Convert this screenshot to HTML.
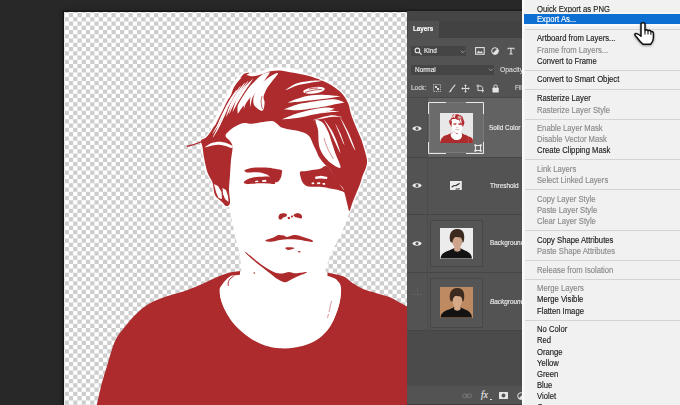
<!DOCTYPE html>
<html><head><meta charset="utf-8"><title>Layers</title>
<style>
html,body{margin:0;padding:0;}
body{width:680px;height:405px;overflow:hidden;background:#282828;position:relative;font-family:"Liberation Sans",sans-serif;}
#stage{position:absolute;left:0;top:0;width:680px;height:405px;overflow:hidden;background:#282828;}
#topbar{display:none;}
#canvas{position:absolute;left:63.700px;top:12.400px;width:344px;height:393px;background-color:#fff;
 overflow:hidden;box-shadow:-0.500px -0.500px 0 0.700px #131313, 0 0 5px 1px rgba(0,0,0,0.35);}
#canvas svg{position:absolute;left:-63.700px;top:-12.400px;}
#panel{position:absolute;left:408px;top:10px;width:116px;height:395px;background:#535353;overflow:hidden;color:#e4e4e4;font-size:8px;}
#menu{position:absolute;left:521.700px;top:0;width:158.300px;height:405px;background:#f1f1f1;overflow:hidden;box-shadow:inset 2.500px 0 0 #fafafa;}
.mi{-webkit-text-stroke:0.150px currentColor;position:absolute;left:15px;height:12px;line-height:12px;font-size:8.3px;color:#1c1c1c;white-space:nowrap;}
.mi span{display:inline-block;transform:scaleX(0.925);transform-origin:0 50%;}
.mi.dis{color:#8a8a8a;}
.mi.hi{color:#fff;}
.hl{position:absolute;left:2.500px;width:156px;height:10.100px;background:#0c6fd1;box-shadow:0 -1.500px 0 #f8f7f4, 0 2px 0 #fafafa;}
.sep{position:absolute;left:3px;width:156px;height:1px;background:#d4d4d4;}
#panel{left:0;top:0;width:680px;height:405px;background:none;pointer-events:none;}
#panel .a{position:absolute;}
#panel .t{position:absolute;white-space:nowrap;line-height:10px;height:10px;font-size:7.6px;color:#eeeeee;-webkit-text-stroke:0.150px currentColor;}
#panel .t span{display:inline-block;transform-origin:0 50%;}

</style></head><body>
<div id="stage">
<div id="topbar"></div>
<div id="canvas">
<svg width="680" height="405" viewBox="0 0 680 405">
<path d="M60.38 6.51H409M60.38 15.03H409M60.38 23.54H409M60.38 32.06H409M60.38 40.58H409M60.38 49.09H409M60.38 57.61H409M60.38 66.13H409M60.38 74.64H409M60.38 83.16H409M60.38 91.67H409M60.38 100.19H409M60.38 108.70H409M60.38 117.22H409M60.38 125.74H409M60.38 134.25H409M60.38 142.77H409M60.38 151.28H409M60.38 159.80H409M60.38 168.32H409M60.38 176.83H409M60.38 185.35H409M60.38 193.87H409M60.38 202.38H409M60.38 210.90H409M60.38 219.41H409M60.38 227.93H409M60.38 236.45H409M60.38 244.96H409M60.38 253.48H409M60.38 261.99H409M60.38 270.51H409M60.38 279.03H409M60.38 287.54H409M60.38 296.06H409M60.38 304.57H409M60.38 313.09H409M60.38 321.61H409M60.38 330.12H409M60.38 338.64H409M60.38 347.15H409M60.38 355.67H409M60.38 364.18H409M60.38 372.70H409M60.38 381.22H409M60.38 389.73H409M60.38 398.25H409M60.38 406.76H409" stroke="#cdcdcd" stroke-width="4.258" stroke-dasharray="4.258 4.258" fill="none"/>
<path d="M56.12 10.77H409M56.12 19.29H409M56.12 27.80H409M56.12 36.32H409M56.12 44.84H409M56.12 53.35H409M56.12 61.87H409M56.12 70.38H409M56.12 78.90H409M56.12 87.42H409M56.12 95.93H409M56.12 104.45H409M56.12 112.96H409M56.12 121.48H409M56.12 129.99H409M56.12 138.51H409M56.12 147.03H409M56.12 155.54H409M56.12 164.06H409M56.12 172.58H409M56.12 181.09H409M56.12 189.61H409M56.12 198.12H409M56.12 206.64H409M56.12 215.16H409M56.12 223.67H409M56.12 232.19H409M56.12 240.70H409M56.12 249.22H409M56.12 257.74H409M56.12 266.25H409M56.12 274.77H409M56.12 283.28H409M56.12 291.80H409M56.12 300.32H409M56.12 308.83H409M56.12 317.35H409M56.12 325.86H409M56.12 334.38H409M56.12 342.89H409M56.12 351.41H409M56.12 359.93H409M56.12 368.44H409M56.12 376.96H409M56.12 385.47H409M56.12 393.99H409M56.12 402.51H409" stroke="#cdcdcd" stroke-width="4.258" stroke-dasharray="4.258 4.258" fill="none"/>
<g id="pt">
<path d="M222.0 140.0C223.0 135.2 225.7 133.5 228.0 131.0C230.3 128.5 232.3 126.7 236.0 125.0C239.7 123.3 244.0 122.0 250.0 121.0C256.0 120.0 265.3 118.5 272.0 119.0C278.7 119.5 283.7 124.2 290.0 124.0C296.3 123.8 303.3 117.8 310.0 118.0C316.7 118.2 324.2 119.7 330.0 125.0C335.8 130.3 341.3 139.2 345.0 150.0C348.7 160.8 351.1 180.3 352.0 190.0C352.9 199.7 351.5 202.7 350.5 208.0C349.5 213.3 347.8 217.2 346.0 222.0C344.2 226.8 341.8 232.1 339.5 237.0C337.2 241.9 334.0 247.2 332.0 251.7C330.0 256.2 328.4 260.6 327.5 264.0C326.6 267.4 324.1 268.8 326.5 272.0C328.9 275.2 339.4 278.3 342.0 283.0C344.6 287.7 344.0 292.2 342.0 300.0C340.0 307.8 337.0 322.2 330.0 330.0C323.0 337.8 310.0 344.0 300.0 347.0C290.0 350.0 279.2 350.0 270.0 348.0C260.8 346.0 252.3 341.0 245.0 335.0C237.7 329.0 230.2 319.2 226.0 312.0C221.8 304.8 220.0 297.8 220.0 292.0C220.0 286.2 222.7 280.3 226.0 277.0C229.3 273.7 237.5 273.8 240.0 272.0C242.5 270.2 240.9 269.0 240.8 266.0C240.7 263.0 240.4 258.4 239.6 254.0C238.8 249.6 237.2 244.8 236.0 239.5C234.8 234.2 233.4 227.8 232.2 222.0C230.9 216.2 230.2 210.3 228.5 205.0C226.8 199.7 223.1 197.5 222.0 190.0C220.9 182.5 222.0 168.3 222.0 160.0C222.0 151.7 221.0 144.8 222.0 140.0Z" fill="#fff" />
<path d="M201.0 140.5C201.6 138.9 204.4 138.9 206.0 137.5C207.6 136.1 209.1 133.9 210.3 132.3C211.5 130.7 212.1 129.3 213.0 128.0C213.9 126.7 214.6 126.2 215.7 124.3C216.8 122.3 218.4 119.0 219.7 116.3C221.0 113.6 222.4 111.0 223.7 108.3C225.0 105.6 226.5 102.5 227.7 100.3C228.9 98.1 229.9 97.2 231.0 95.0C232.1 92.8 232.5 89.9 234.0 87.3C235.5 84.7 238.1 81.3 240.0 79.3C241.9 77.2 243.3 75.5 245.5 75.0C247.7 74.5 250.1 76.5 253.0 76.3C255.9 76.1 259.8 74.8 262.7 74.0C265.6 73.2 267.8 71.9 270.7 71.3C273.6 70.7 276.8 70.3 280.0 70.5C283.2 70.7 286.7 71.7 290.0 72.3C293.3 72.9 296.7 73.3 300.0 74.0C303.3 74.7 306.7 75.3 310.0 76.3C313.3 77.3 317.0 78.6 320.0 79.8C323.0 81.0 325.7 82.1 328.0 83.3C330.3 84.5 332.0 85.6 334.0 87.0C336.0 88.4 338.2 89.8 340.0 91.5C341.8 93.2 343.5 95.2 345.0 97.5C346.5 99.8 347.9 102.5 348.8 105.0C349.7 107.5 349.7 109.8 350.5 112.5C351.3 115.2 352.4 118.1 353.5 121.0C354.6 123.9 356.0 126.8 357.3 130.0C358.6 133.2 360.3 136.7 361.5 140.0C362.7 143.3 363.6 146.7 364.5 150.0C365.4 153.3 366.8 157.1 367.0 160.0C367.2 162.9 366.8 164.8 366.0 167.5C365.2 170.2 363.5 173.2 362.5 176.0C361.5 178.8 361.1 181.0 360.0 184.0C358.9 187.0 357.2 190.9 356.0 194.0C354.8 197.1 353.6 199.7 352.5 202.5C351.4 205.3 350.3 210.6 349.5 211.0C348.7 211.4 348.2 207.7 347.5 205.0C346.8 202.3 345.8 197.8 345.0 195.0C344.2 192.2 344.2 190.0 343.0 188.0C341.8 186.0 339.5 185.0 338.0 183.0C336.5 181.0 335.3 178.2 334.0 176.0C332.7 173.8 331.7 171.6 330.0 169.5C328.3 167.4 325.8 165.6 324.0 163.5C322.2 161.4 320.2 159.0 319.0 157.0C317.8 155.0 317.4 153.4 316.5 151.3C315.6 149.2 314.4 147.0 313.3 144.7C312.2 142.4 311.3 139.2 310.0 137.3C308.7 135.4 307.4 134.4 305.3 133.3C303.2 132.2 300.2 131.4 297.3 130.7C294.4 130.0 290.7 129.9 288.0 129.3C285.3 128.7 282.8 128.2 281.0 127.3C279.2 126.4 278.6 124.8 277.0 123.7C275.4 122.7 274.4 121.2 271.7 121.0C269.0 120.8 264.3 121.8 261.0 122.3C257.7 122.8 254.6 123.6 251.7 123.7C248.8 123.8 246.4 122.6 243.7 123.0C241.0 123.4 238.1 125.0 235.7 126.3C233.2 127.6 230.7 129.4 229.0 131.0C227.3 132.6 225.3 134.3 225.5 136.0C225.7 137.7 228.8 139.2 230.0 141.0C231.2 142.8 232.3 143.8 232.5 147.0C232.7 150.2 231.4 155.3 231.0 160.0C230.6 164.7 230.3 170.0 230.0 175.0C229.7 180.0 229.0 185.3 229.0 190.0C229.0 194.7 230.5 200.3 230.0 203.0C229.5 205.7 227.3 206.2 226.0 206.0C224.7 205.8 223.8 203.8 222.0 202.0C220.2 200.2 216.6 198.2 215.0 195.0C213.4 191.8 213.8 186.2 212.5 182.5C211.2 178.8 208.9 176.7 207.5 172.5C206.1 168.3 204.8 161.8 204.0 157.5C203.2 153.2 203.0 149.8 202.5 147.0C202.0 144.2 200.4 142.1 201.0 140.5Z" fill="none" stroke="#fff" stroke-width="2.600" stroke-linejoin="round"/>
<path d="M214.0 127.0C214.9 125.2 218.1 119.4 219.7 116.3C221.3 113.2 222.4 111.0 223.7 108.3C225.0 105.6 226.5 102.5 227.7 100.3C228.9 98.1 229.9 97.2 231.0 95.0C232.1 92.8 232.5 89.9 234.0 87.3C235.5 84.7 238.1 81.3 240.0 79.3C241.9 77.2 243.3 75.5 245.5 75.0C247.7 74.5 250.1 76.5 253.0 76.3C255.9 76.1 259.8 74.8 262.7 74.0C265.6 73.2 267.8 71.9 270.7 71.3C273.6 70.7 276.8 70.5 280.0 70.5C283.2 70.5 286.7 71.0 290.0 71.5C293.3 72.0 298.3 72.9 300.0 73.2" fill="none" stroke="#fff" stroke-width="6.500" stroke-linecap="round"/>
<path d="M201.0 140.5C201.6 138.9 204.4 138.9 206.0 137.5C207.6 136.1 209.1 133.9 210.3 132.3C211.5 130.7 212.1 129.3 213.0 128.0C213.9 126.7 214.6 126.2 215.7 124.3C216.8 122.3 218.4 119.0 219.7 116.3C221.0 113.6 222.4 111.0 223.7 108.3C225.0 105.6 226.5 102.5 227.7 100.3C228.9 98.1 229.9 97.2 231.0 95.0C232.1 92.8 232.5 89.9 234.0 87.3C235.5 84.7 238.1 81.3 240.0 79.3C241.9 77.2 243.3 75.5 245.5 75.0C247.7 74.5 250.1 76.5 253.0 76.3C255.9 76.1 259.8 74.8 262.7 74.0C265.6 73.2 267.8 71.9 270.7 71.3C273.6 70.7 276.8 70.3 280.0 70.5C283.2 70.7 286.7 71.7 290.0 72.3C293.3 72.9 296.7 73.3 300.0 74.0C303.3 74.7 306.7 75.3 310.0 76.3C313.3 77.3 317.0 78.6 320.0 79.8C323.0 81.0 325.7 82.1 328.0 83.3C330.3 84.5 332.0 85.6 334.0 87.0C336.0 88.4 338.2 89.8 340.0 91.5C341.8 93.2 343.5 95.2 345.0 97.5C346.5 99.8 347.9 102.5 348.8 105.0C349.7 107.5 349.7 109.8 350.5 112.5C351.3 115.2 352.4 118.1 353.5 121.0C354.6 123.9 356.0 126.8 357.3 130.0C358.6 133.2 360.3 136.7 361.5 140.0C362.7 143.3 363.6 146.7 364.5 150.0C365.4 153.3 366.8 157.1 367.0 160.0C367.2 162.9 366.8 164.8 366.0 167.5C365.2 170.2 363.5 173.2 362.5 176.0C361.5 178.8 361.1 181.0 360.0 184.0C358.9 187.0 357.2 190.9 356.0 194.0C354.8 197.1 353.6 199.7 352.5 202.5C351.4 205.3 350.3 210.6 349.5 211.0C348.7 211.4 348.2 207.7 347.5 205.0C346.8 202.3 345.8 197.8 345.0 195.0C344.2 192.2 344.2 190.0 343.0 188.0C341.8 186.0 339.5 185.0 338.0 183.0C336.5 181.0 335.3 178.2 334.0 176.0C332.7 173.8 331.7 171.6 330.0 169.5C328.3 167.4 325.8 165.6 324.0 163.5C322.2 161.4 320.2 159.0 319.0 157.0C317.8 155.0 317.4 153.4 316.5 151.3C315.6 149.2 314.4 147.0 313.3 144.7C312.2 142.4 311.3 139.2 310.0 137.3C308.7 135.4 307.4 134.4 305.3 133.3C303.2 132.2 300.2 131.4 297.3 130.7C294.4 130.0 290.7 129.9 288.0 129.3C285.3 128.7 282.8 128.2 281.0 127.3C279.2 126.4 278.6 124.8 277.0 123.7C275.4 122.7 274.4 121.2 271.7 121.0C269.0 120.8 264.3 121.8 261.0 122.3C257.7 122.8 254.6 123.6 251.7 123.7C248.8 123.8 246.4 122.6 243.7 123.0C241.0 123.4 238.1 125.0 235.7 126.3C233.2 127.6 230.7 129.4 229.0 131.0C227.3 132.6 225.3 134.3 225.5 136.0C225.7 137.7 228.8 139.2 230.0 141.0C231.2 142.8 232.3 143.8 232.5 147.0C232.7 150.2 231.4 155.3 231.0 160.0C230.6 164.7 230.3 170.0 230.0 175.0C229.7 180.0 229.0 185.3 229.0 190.0C229.0 194.7 230.5 200.3 230.0 203.0C229.5 205.7 227.3 206.2 226.0 206.0C224.7 205.8 223.8 203.8 222.0 202.0C220.2 200.2 216.6 198.2 215.0 195.0C213.4 191.8 213.8 186.2 212.5 182.5C211.2 178.8 208.9 176.7 207.5 172.5C206.1 168.3 204.8 161.8 204.0 157.5C203.2 153.2 203.0 149.8 202.5 147.0C202.0 144.2 200.4 142.1 201.0 140.5Z" fill="#ae2b2d" />
<path d="M96.8 405.0C97.2 403.0 98.6 396.8 99.5 393.0C100.4 389.2 100.7 387.1 102.0 382.5C103.3 377.9 105.5 370.9 107.2 365.2C108.9 359.4 110.9 352.5 112.4 348.0C114.0 343.5 114.5 341.5 116.5 338.0C118.5 334.5 121.2 331.3 124.5 327.2C127.8 323.1 132.3 317.4 136.6 313.4C140.9 309.4 145.2 305.9 150.4 303.0C155.6 300.1 161.9 298.0 167.7 296.0C173.5 294.0 179.2 293.0 185.0 291.0C190.8 289.0 197.0 286.2 202.2 284.0C207.4 281.8 211.7 279.3 216.0 277.5C220.3 275.7 224.0 274.1 228.0 273.0C232.0 271.9 238.0 271.3 240.0 271.0L240.0 276.0C237.0 277.5 225.3 281.8 222.0 285.0C218.7 288.2 219.5 290.8 220.0 295.0C220.5 299.2 222.5 305.0 225.0 310.0C227.5 315.0 230.8 320.4 235.0 325.0C239.2 329.6 245.0 334.2 250.0 337.5C255.0 340.8 260.0 343.3 265.0 345.0C270.0 346.7 275.0 347.2 280.0 347.5C285.0 347.8 289.6 347.8 295.0 346.5C300.4 345.2 307.1 342.8 312.5 340.0C317.9 337.2 323.3 335.0 327.5 330.0C331.7 325.0 335.2 316.2 337.5 310.0C339.8 303.8 340.8 297.1 341.0 292.5C341.2 287.9 341.2 285.2 339.0 282.5C336.8 279.8 329.4 277.1 327.5 276.0L327.5 272.5C329.0 272.9 333.8 273.8 336.7 274.6C339.6 275.4 342.5 275.9 345.2 277.3C347.9 278.7 349.5 281.0 352.6 283.0C355.7 285.0 359.7 287.6 363.6 289.2C367.5 290.8 371.7 291.7 375.8 292.9C379.9 294.1 384.3 295.2 388.0 296.6C391.7 298.0 394.5 299.8 397.8 301.5C401.1 303.2 406.3 306.1 408.0 307.0L408.0 405.0L96.8 405.0Z" fill="#ae2b2d" />
<path d="M238.0 275.0C231.3 276.1 232.7 274.8 230.0 276.5C227.3 278.2 223.7 281.9 222.0 285.0C220.3 288.1 219.5 290.8 220.0 295.0C220.5 299.2 222.5 305.0 225.0 310.0C227.5 315.0 230.8 320.3 235.0 325.0C239.2 329.7 245.0 334.6 250.0 338.0C255.0 341.4 260.0 343.8 265.0 345.5C270.0 347.2 275.0 348.0 280.0 348.3C285.0 348.6 290.0 348.3 295.0 347.5C300.0 346.7 305.3 345.4 309.8 343.5C314.3 341.6 318.3 339.3 322.0 336.0C325.7 332.7 329.2 328.0 331.8 323.5C334.4 319.0 336.4 313.3 337.9 308.8C339.3 304.3 340.1 300.3 340.5 296.6C340.9 292.9 340.9 289.6 340.3 286.8C339.7 284.0 338.2 281.3 336.7 279.7C335.1 278.1 332.6 277.6 331.0 277.0C329.4 276.4 332.2 277.2 327.0 276.0C321.8 274.8 309.5 271.0 300.0 270.0C290.5 269.0 280.3 269.2 270.0 270.0C259.7 270.8 244.7 273.9 238.0 275.0Z" fill="#fff" />
<path d="M233.5 276.5C229.5 278 227.5 282 228.3 286" fill="none" stroke="#ae2b2d" stroke-width="1"/>
<path d="M331.5 301L329 312M328.5 314L327.5 318" fill="none" stroke="#ae2b2d" stroke-width="0.6" opacity="0.8"/>
<path d="M268.6 72.3C267.5 72.5 264.4 73.3 262.3 74.6C260.1 75.9 258.0 78.1 255.8 80.2C253.6 82.3 251.0 85.0 249.2 87.2C247.4 89.4 246.4 91.1 244.9 93.3C243.5 95.5 241.7 98.2 240.5 100.3C239.3 102.4 238.2 104.0 237.7 106.1C237.2 108.2 237.6 111.8 237.7 112.9C237.8 114.1 237.6 113.9 238.3 113.1C239.0 112.2 240.5 109.5 241.7 107.9C242.9 106.3 244.0 105.5 245.5 103.7C246.9 101.9 248.9 99.3 250.5 97.3C252.0 95.3 253.0 93.9 254.8 91.8C256.5 89.7 259.0 87.0 260.8 84.8C262.6 82.6 264.3 80.3 265.7 78.4C267.2 76.5 268.9 74.3 269.4 73.3C269.8 72.3 269.8 72.1 268.6 72.3Z" fill="#fff" />
<path d="M277.2 73.1C276.2 73.4 273.4 74.5 271.7 75.5C270.0 76.4 268.6 77.5 267.0 78.7C265.5 79.9 263.7 81.5 262.4 82.8C261.0 84.1 260.1 85.0 258.9 86.6C257.7 88.2 256.1 90.3 255.2 92.4C254.3 94.5 253.4 96.8 253.3 99.0C253.2 101.2 253.1 103.7 254.4 105.6C255.6 107.6 259.1 109.9 260.6 110.6C262.1 111.2 262.7 110.8 263.4 109.4C264.1 108.1 264.6 104.1 264.6 102.4C264.7 100.6 263.8 100.1 263.7 99.0C263.6 97.9 263.5 97.0 263.8 95.6C264.2 94.2 265.1 92.2 265.7 90.8C266.3 89.4 266.7 88.5 267.6 87.2C268.5 85.8 269.9 84.1 271.0 82.7C272.1 81.2 273.2 80.0 274.3 78.5C275.4 77.1 277.3 74.8 277.8 73.9C278.3 73.0 278.2 72.8 277.2 73.1Z" fill="#fff" />
<path d="M264.8 79.1C263.4 80.2 259.5 83.5 257.1 86.3C254.8 89.2 251.9 93.0 250.7 96.3C249.5 99.6 250.1 104.3 250.1 106.0C250.1 107.6 250.1 107.5 250.5 106.0C250.9 104.6 251.3 100.2 252.7 97.1C254.1 94.1 256.8 90.6 258.9 87.7C261.0 84.7 264.2 80.9 265.2 79.5C266.2 78.1 266.1 78.0 264.8 79.1Z" fill="#fff" />
<path d="M251.8 79.8C250.2 81.3 245.4 85.9 242.9 89.2C240.3 92.5 237.9 96.2 236.3 99.9C234.6 103.5 233.3 109.0 232.8 110.9C232.3 112.8 232.2 112.7 233.2 111.1C234.2 109.5 236.7 104.5 238.7 101.1C240.7 97.8 242.9 94.3 245.1 90.8C247.4 87.3 251.1 82.0 252.2 80.2C253.3 78.4 253.3 78.3 251.8 79.8Z" fill="#fff" />
<path d="M243.8 83.8C242.3 85.5 237.9 91.0 235.6 94.5C233.4 97.9 231.7 101.0 230.1 104.6C228.5 108.1 226.9 114.0 226.3 115.9C225.7 117.8 225.8 117.8 226.7 116.1C227.6 114.3 230.1 108.9 231.9 105.4C233.7 102.0 235.3 99.1 237.4 95.5C239.4 92.0 243.2 86.1 244.2 84.2C245.3 82.2 245.2 82.1 243.8 83.8Z" fill="#fff" />
<path d="M235.7 90.8C234.6 92.4 231.1 97.3 229.2 100.6C227.3 103.9 225.6 107.2 224.2 110.6C222.8 114.0 221.3 119.2 220.8 120.9C220.3 122.7 220.4 122.7 221.2 121.1C222.0 119.5 224.2 114.6 225.8 111.4C227.4 108.1 229.0 104.8 230.8 101.4C232.5 98.1 235.4 92.9 236.3 91.2C237.1 89.4 236.9 89.3 235.7 90.8Z" fill="#fff" />
<path d="M226.8 109.9C225.9 111.5 223.1 116.4 221.4 119.7C219.6 123.0 217.8 126.8 216.4 129.7C215.0 132.5 213.4 135.7 212.8 136.9C212.3 138.1 212.4 138.2 213.2 137.1C214.0 136.0 216.0 133.1 217.6 130.3C219.2 127.5 221.0 123.7 222.6 120.3C224.2 116.9 226.5 111.8 227.2 110.1C227.9 108.4 227.8 108.3 226.8 109.9Z" fill="#fff" />
<path d="M247.3 81.8C245.9 83.4 241.7 88.2 239.3 91.6C237.0 94.9 235.0 98.6 233.3 102.1C231.6 105.7 229.9 111.1 229.3 112.9C228.7 114.7 228.8 114.8 229.7 113.1C230.6 111.4 232.9 106.3 234.7 102.9C236.5 99.4 238.5 95.9 240.7 92.4C242.8 89.0 246.6 83.9 247.7 82.2C248.8 80.4 248.7 80.3 247.3 81.8Z" fill="#fff" />
<path d="M239.8 86.8C238.4 88.4 234.6 93.3 232.4 96.6C230.3 99.9 228.4 103.3 226.9 106.7C225.4 110.1 223.8 115.2 223.3 116.9C222.8 118.7 222.9 118.7 223.7 117.1C224.5 115.5 226.5 110.6 228.1 107.3C229.8 104.0 231.6 100.7 233.6 97.4C235.6 94.0 239.2 88.9 240.2 87.2C241.3 85.4 241.1 85.3 239.8 86.8Z" fill="#fff" />
<path d="M230.8 98.9C229.9 100.3 227.1 104.5 225.4 107.7C223.6 110.8 221.8 114.5 220.4 117.7C218.9 120.9 217.3 125.4 216.8 126.9C216.3 128.5 216.4 128.5 217.2 127.1C218.0 125.6 220.1 121.4 221.6 118.3C223.2 115.2 225.0 111.5 226.6 108.3C228.2 105.1 230.5 100.7 231.2 99.1C231.9 97.5 231.8 97.5 230.8 98.9Z" fill="#fff" />
<path d="M221.8 116.9C221.0 118.2 219.0 122.0 217.5 124.7C216.0 127.4 213.5 131.5 212.8 132.9C212.1 134.3 212.2 134.4 213.2 133.1C214.1 131.8 217.0 128.0 218.5 125.3C220.0 122.6 221.6 118.5 222.2 117.1C222.7 115.7 222.6 115.6 221.8 116.9Z" fill="#fff" />
<path d="M255.8 84.9C254.7 86.1 251.2 90.0 249.4 92.6C247.7 95.3 246.3 98.2 245.4 100.7C244.4 103.3 244.0 106.7 243.8 107.9C243.6 109.2 243.7 109.2 244.2 108.1C244.7 106.9 245.6 103.7 246.6 101.3C247.7 98.8 249.0 96.1 250.6 93.4C252.2 90.7 255.3 86.5 256.2 85.1C257.0 83.7 257.0 83.6 255.8 84.9Z" fill="#fff" />
<path d="M262 96C260.500 101 261 105 262.500 109" fill="none" stroke="#ae2b2d" stroke-width="0.7"/>
<path d="M290.1 102.4C292.7 102.3 300.3 101.4 305.4 100.9C310.4 100.4 314.7 100.0 320.2 99.3C325.6 98.6 335.0 97.3 338.0 96.7C341.0 96.1 341.0 96.2 338.0 95.9C335.0 95.6 325.4 94.6 319.8 94.7C314.3 94.8 309.6 95.4 304.6 96.5C299.7 97.7 292.3 100.6 289.9 101.6C287.5 102.6 287.5 102.5 290.1 102.4Z" fill="#fff" />
<path d="M285.3 109.5C287.0 109.7 292.0 110.3 295.4 110.3C298.7 110.3 300.4 110.2 305.3 109.6C310.2 108.9 319.8 107.5 325.0 106.6C330.1 105.7 333.0 104.7 336.1 104.1C339.2 103.5 342.2 103.1 343.5 102.8C344.7 102.5 344.8 102.8 343.5 102.2C342.3 101.7 339.2 99.9 335.9 99.5C332.7 99.1 329.3 99.4 324.0 100.0C318.8 100.6 309.2 102.2 304.3 103.0C299.4 103.9 297.8 104.3 294.6 105.3C291.5 106.3 286.8 108.2 285.3 108.9C283.7 109.6 283.7 109.3 285.3 109.5Z" fill="#fff" />
<path d="M283.6 119.3C286.1 119.1 293.6 118.6 298.6 117.8C303.6 117.1 308.9 115.7 313.6 114.6C318.2 113.6 322.9 112.6 326.3 111.7C329.7 110.8 332.8 109.6 334.0 109.1C335.3 108.6 335.4 108.8 334.0 108.5C332.6 108.2 329.3 107.4 325.7 107.5C322.1 107.7 317.1 108.4 312.4 109.4C307.7 110.3 302.3 111.6 297.4 113.2C292.6 114.7 285.7 117.7 283.4 118.7C281.1 119.7 281.0 119.4 283.6 119.3Z" fill="#fff" />
<path d="M286.8 89.7C288.5 89.0 293.5 86.5 297.0 85.4C300.6 84.4 304.0 83.9 308.0 83.2C311.9 82.4 318.8 81.4 321.0 81.0C323.2 80.6 323.2 80.6 321.0 80.6C318.8 80.6 311.8 80.7 307.6 81.2C303.5 81.7 299.9 82.2 296.4 83.6C292.9 84.9 288.2 88.3 286.6 89.3C285.0 90.3 285.1 90.3 286.8 89.7Z" fill="#fff" />
<ellipse cx="314" cy="90.300" rx="11" ry="3.200" fill="#fff" transform="rotate(-8 314 90.300)"/>
<path d="M305 92.500C310 90.500 316 89.500 322 89.500M309 89C312 88.300 315 88 318 88" fill="none" stroke="#ae2b2d" stroke-width="0.8"/>
<path d="M314.0 120.2C315.8 119.9 321.0 118.8 324.2 118.3C327.3 117.7 330.2 117.0 333.0 116.8C335.8 116.6 339.6 117.2 341.0 117.2C342.3 117.2 342.4 117.1 341.0 116.8C339.7 116.5 335.8 115.2 333.0 115.2C330.1 115.2 327.0 115.9 323.8 116.7C320.7 117.5 315.6 119.2 314.0 119.8C312.3 120.4 312.3 120.4 314.0 120.2Z" fill="#fff" />
<path d="M322.0 113.2C323.4 113.1 327.4 112.4 330.1 112.2C332.7 111.9 336.7 111.8 338.0 111.7C339.3 111.6 339.3 111.4 338.0 111.3C336.7 111.2 332.6 110.6 329.9 110.8C327.3 111.1 323.3 112.4 322.0 112.8C320.6 113.2 320.7 113.3 322.0 113.2Z" fill="#fff" />
<path d="M315.5 120.5C315.7 118.9 317.7 120.0 319.0 120.5C320.3 121.0 321.9 121.5 323.5 123.5C325.1 125.5 327.0 129.0 328.5 132.5C330.0 136.0 331.2 140.9 332.5 144.7C333.8 148.4 334.9 152.1 336.0 155.0C337.1 157.9 338.2 159.9 339.0 162.0C339.8 164.1 340.8 166.7 340.5 167.5C340.2 168.3 338.8 167.8 337.0 167.0C335.2 166.2 332.2 164.3 330.0 162.5C327.8 160.7 325.6 158.1 324.0 156.0C322.4 153.9 321.4 152.2 320.5 150.0C319.6 147.8 319.1 146.3 318.7 143.0C318.3 139.7 318.5 133.8 318.0 130.0C317.5 126.2 315.3 122.1 315.5 120.5Z" fill="#fff" />
<path d="M324 138C326 146 329 152 333.500 159" fill="none" stroke="#ae2b2d" stroke-width="0.5"/>
<path d="M324.8 121.1C325.7 122.9 328.5 127.9 330.2 131.4C331.9 135.0 333.6 138.9 335.2 142.4C336.8 145.8 339.0 150.5 339.8 152.1C340.6 153.7 340.7 153.7 340.2 151.9C339.7 150.2 338.2 145.2 336.8 141.6C335.4 138.1 333.7 134.0 331.8 130.6C329.9 127.1 326.3 122.5 325.2 120.9C324.0 119.3 324.0 119.3 324.8 121.1Z" fill="#fff" />
<path d="M340.8 119.1C341.7 121.2 344.6 127.3 346.4 131.3C348.1 135.3 349.9 140.1 351.4 143.3C352.8 146.4 354.2 149.0 354.8 150.1C355.5 151.2 355.5 151.1 355.2 149.9C354.8 148.7 353.9 145.9 352.6 142.7C351.4 139.5 349.5 134.7 347.6 130.7C345.7 126.7 342.3 120.8 341.2 118.9C340.0 117.0 340.0 117.0 340.8 119.1Z" fill="#fff" />
<path d="M335.8 125.1C336.4 126.6 338.2 131.0 339.5 134.2C340.9 137.4 343.0 142.5 343.8 144.1C344.6 145.7 344.7 145.6 344.2 143.9C343.6 142.2 341.8 137.0 340.5 133.8C339.1 130.6 337.0 126.4 336.2 124.9C335.4 123.5 335.3 123.5 335.8 125.1Z" fill="#fff" />
<path d="M214.0 184.0L218.0 186.0L221.5 192.0L222.0 199.0L218.5 198.0L216.0 192.0Z" fill="#fff" />
<path d="M222.5 188.0L226.0 190.0L228.0 196.0L228.5 202.0L225.0 199.0L223.0 194.0Z" fill="#fff" />
<path d="M205.6 147.2C206.7 147.0 210.1 145.9 212.3 145.5C214.6 145.0 216.8 144.6 219.0 144.7C221.2 144.8 223.5 145.4 225.6 145.9C227.7 146.5 230.5 147.9 231.6 147.9C232.7 147.9 233.3 146.9 232.4 146.1C231.5 145.3 228.6 143.8 226.4 143.1C224.2 142.3 221.5 141.7 219.0 141.7C216.6 141.7 213.9 142.3 211.7 143.1C209.4 144.0 206.4 146.1 205.4 146.8C204.4 147.5 204.4 147.4 205.6 147.2Z" fill="#fff" />
<path d="M187.500 146.200C195 144.800 203 141.500 212 136.500" fill="none" stroke="#ae2b2d" stroke-width="1.400" stroke-linecap="round"/>
<path d="M241.2 77.7C242.0 77.4 244.2 76.1 245.5 75.4C246.8 74.6 248.5 73.7 249.1 73.3C249.7 72.8 249.7 72.7 248.9 72.7C248.1 72.8 245.9 72.9 244.5 73.6C243.2 74.4 241.4 76.6 240.8 77.3C240.3 77.9 240.4 78.1 241.2 77.7Z" fill="#ae2b2d" />
<path d="M244.6 170.2C245.3 169.5 247.9 168.8 250.0 168.3C252.1 167.9 254.3 167.6 257.0 167.5C259.7 167.4 263.3 167.4 266.0 167.6C268.7 167.8 270.4 168.0 273.0 168.4C275.6 168.8 279.8 169.2 281.3 170.0C282.8 170.8 281.9 172.1 281.8 173.5C281.7 174.9 281.2 177.1 280.5 178.5C279.8 179.9 278.5 181.5 277.5 182.0C276.5 182.5 275.6 182.2 274.5 181.5C273.4 180.8 272.2 179.1 271.0 178.0C269.8 176.9 268.8 175.6 267.5 174.8C266.2 174.0 264.8 173.6 263.0 173.2C261.2 172.8 259.2 172.4 257.0 172.3C254.8 172.2 251.8 172.5 250.0 172.5C248.2 172.5 246.9 172.6 246.0 172.2C245.1 171.8 243.9 170.8 244.6 170.2Z" fill="#ae2b2d" />
<path d="M243.7 182.6C243.7 181.8 245.6 180.4 247.0 179.6C248.4 178.8 250.0 178.3 252.0 177.8C254.0 177.3 256.5 177.0 259.0 176.8C261.5 176.6 264.8 176.3 267.0 176.4C269.2 176.5 270.7 176.7 272.0 177.5C273.3 178.3 274.6 179.9 275.0 181.0C275.4 182.1 275.7 183.6 274.5 184.0C273.3 184.4 270.4 183.7 268.0 183.6C265.6 183.5 262.7 183.3 260.0 183.3C257.3 183.3 254.2 183.7 252.0 183.8C249.8 183.9 248.4 184.3 247.0 184.1C245.6 183.9 243.7 183.3 243.7 182.6Z" fill="#ae2b2d" />
<path d="M262.0 180.3L266.0 179.8L266.5 181.8L262.5 182.1Z" fill="#fff" />
<path d="M255.0 181.0L258.0 180.6L258.3 182.0L255.3 182.3Z" fill="#fff" />
<path d="M300.0 172.0C300.6 170.7 303.0 171.5 305.0 171.2C307.0 170.9 309.5 170.4 312.0 170.0C314.5 169.6 317.7 169.5 320.0 168.8C322.3 168.1 324.0 165.5 326.0 166.0C328.0 166.5 330.0 169.3 332.0 172.0C334.0 174.7 335.8 178.7 338.0 182.0C340.2 185.3 344.4 190.5 345.0 192.0C345.6 193.5 343.0 191.4 341.5 191.0C340.0 190.6 337.9 189.9 336.0 189.5C334.1 189.1 332.0 188.9 330.0 188.5C328.0 188.1 326.5 187.5 324.0 187.2C321.5 186.9 317.8 186.9 315.0 186.7C312.2 186.5 309.0 186.8 307.0 186.2C305.0 185.6 304.0 184.2 303.0 183.0C302.0 181.8 301.7 180.8 301.2 179.0C300.7 177.2 299.4 173.3 300.0 172.0Z" fill="#ae2b2d" />
<path d="M315.0 176.8L321.0 175.8L327.4 177.0L327.0 179.0L320.0 178.5L315.5 179.0Z" fill="#fff" />
<path d="M311.5 182.8L314.0 182.3L314.3 184.0L311.8 184.3Z" fill="#fff" />
<path d="M317.0 182.5L320.0 182.2L320.3 184.0L317.3 184.2Z" fill="#fff" />
<path d="M322.5 183.0L325.0 183.0L325.2 184.8L322.8 184.8Z" fill="#fff" />
<path d="M278.5 216.8C278.6 216.0 279.0 214.8 279.8 214.2C280.6 213.6 282.3 213.2 283.5 213.2C284.7 213.2 286.4 213.7 286.8 214.2C287.2 214.7 286.8 215.9 286.2 216.4C285.6 216.9 284.0 216.9 283.2 217.4C282.4 217.9 281.9 219.2 281.2 219.5C280.5 219.8 279.4 219.4 279.0 219.0C278.6 218.6 278.4 217.6 278.5 216.8Z" fill="#ae2b2d" />
<path d="M293.5 215.2C293.6 214.6 294.9 213.8 296.0 213.5C297.1 213.2 299.0 213.3 300.0 213.7C301.0 214.1 301.8 215.2 302.0 216.0C302.2 216.8 301.9 218.3 301.3 218.6C300.7 218.9 299.5 217.9 298.5 217.7C297.5 217.5 296.3 217.6 295.5 217.2C294.7 216.8 293.4 215.8 293.5 215.2Z" fill="#ae2b2d" />
<path d="M287.5 217.3L289.8 216.8L290.2 218.7L288.0 219.2Z" fill="#ae2b2d" />
<path d="M291.0 215.8L292.8 215.6L293.0 217.2L291.2 217.4Z" fill="#ae2b2d" />
<path d="M265.9 240.0C266.9 239.4 270.9 238.6 273.0 237.8C275.1 237.0 276.5 235.5 278.3 235.1C280.1 234.7 282.2 235.3 283.7 235.6C285.2 235.9 285.4 237.0 287.2 236.9C289.0 236.8 291.9 235.2 294.3 235.1C296.7 235.0 299.0 235.8 301.4 236.4C303.8 237.0 306.8 238.1 308.6 238.7C310.4 239.3 311.7 239.7 312.3 240.2C312.9 240.7 313.6 241.8 312.1 241.9C310.6 242.0 306.2 240.9 303.2 240.5C300.2 240.1 297.0 239.5 294.3 239.3C291.6 239.1 289.6 239.2 287.2 239.3C284.8 239.4 282.5 239.7 280.1 240.0C277.7 240.3 275.2 241.2 273.0 241.4C270.8 241.7 268.0 241.7 266.8 241.5C265.6 241.3 264.9 240.6 265.9 240.0Z" fill="#ae2b2d" />
<path d="M285.4 247.8C285.9 247.4 288.5 247.3 290.0 247.3C291.5 247.3 294.3 247.6 294.5 248.0C294.7 248.4 292.2 249.3 291.0 249.6C289.8 249.9 287.9 250.1 287.0 249.8C286.1 249.5 284.9 248.2 285.4 247.8Z" fill="#ae2b2d" />
<path d="M298.0 251.0L300.5 251.3L300.3 252.5L298.2 252.2Z" fill="#ae2b2d" />
<path d="M245.4 252.0C246.6 252.7 250.6 256.0 253.4 258.2C256.2 260.4 259.3 263.2 262.3 265.3C265.3 267.4 268.5 269.4 271.2 270.7C273.9 272.0 276.2 272.9 278.3 273.3C280.4 273.7 281.9 273.5 283.7 273.3C285.5 273.1 286.9 271.9 289.0 271.9C291.1 271.9 293.3 273.3 296.1 273.3C298.9 273.3 304.3 272.2 305.9 272.1C307.5 272.1 306.9 272.4 305.9 273.0C304.9 273.6 301.9 274.6 299.7 275.5C297.5 276.4 295.0 277.6 292.6 278.7C290.2 279.8 287.8 282.0 285.4 282.2C283.0 282.4 280.7 280.9 278.3 279.6C275.9 278.3 273.7 276.1 271.2 274.2C268.7 272.3 265.9 270.1 263.2 268.0C260.5 265.9 258.0 264.2 255.2 261.8C252.4 259.4 247.9 255.4 246.3 253.8C244.7 252.2 244.2 251.3 245.4 252.0Z" fill="#ae2b2d" />
<circle cx="254.300" cy="273" r="0.800" fill="#ae2b2d"/>
</g>
</svg>
</div>
<div id="panel">
<div class="a" style="left:406.500px;top:8.5px;width:116.500px;height:2.5px;background:#1e1e1e"></div>
<div class="a" style="left:406.500px;top:11px;width:116.500px;height:394px;background:#535353"></div>
<div class="a" style="left:406.500px;top:11px;width:116.500px;height:9.500px;background:#454545"></div>
<div class="a" style="left:406.500px;top:20.5px;width:116.500px;height:17.500px;background:#424242"></div>
<div class="a" style="left:408px;top:20.5px;width:30.500px;height:18px;background:#515151"></div>
<div class="t" style="left:413px;top:23.7px;font-weight:bold;color:#fff;font-size:7.6px"><span style="transform:scaleX(0.83)">Layers</span></div>

<!-- kind dropdown -->
<div class="a" style="left:410.500px;top:45.800px;width:55.500px;height:10px;background:#454545;border-radius:1px"></div>
<svg class="a" style="left:414px;top:46.500px" width="9" height="9" viewBox="0 0 9 9"><circle cx="3.400" cy="3.400" r="2.300" fill="none" stroke="#e0e0e0" stroke-width="1.100"/><path d="M5.100 5.100L7.600 7.600" stroke="#e0e0e0" stroke-width="1.300"/></svg>
<div class="t" style="left:424px;top:45.700px"><span style="transform:scaleX(0.845)">Kind</span></div>
<svg class="a" style="left:459.500px;top:49.500px" width="6" height="4" viewBox="0 0 6 4"><path d="M0.800 0.700L2.800 2.800L4.800 0.700" fill="none" stroke="#a8a8a8" stroke-width="0.800"/></svg>
<!-- filter icons -->
<svg class="a" style="left:474.500px;top:46.800px" width="10" height="8" viewBox="0 0 10 8"><rect x="0.600" y="0.600" width="8.600" height="6.600" fill="none" stroke="#e2e2e2" stroke-width="1.100"/><path d="M1.800 6L3.600 3.500L5 5.200L6.300 4L8 6Z" fill="#e2e2e2"/></svg>
<svg class="a" style="left:491px;top:46.800px" width="8" height="8" viewBox="0 0 8 8"><circle cx="4" cy="4" r="3.300" fill="none" stroke="#e2e2e2" stroke-width="1"/><path d="M1.600 6.400A3.300 3.300 0 0 0 6.400 1.600Z" fill="#e2e2e2"/></svg>
<svg class="a" style="left:507px;top:46.800px" width="8" height="8" viewBox="0 0 8 8"><path d="M0.600 0.700H7.400V2.400H6.600V1.700H4.600V6.600H5.600V7.400H2.400V6.600H3.400V1.700H1.400V2.400H0.600Z" fill="#e2e2e2"/></svg>

<!-- blend dropdown -->
<div class="a" style="left:410.500px;top:64.500px;width:83.500px;height:10px;background:#454545;border-radius:1px"></div>
<div class="t" style="left:415px;top:64.600px"><span style="transform:scaleX(0.845)">Normal</span></div>
<svg class="a" style="left:488px;top:68.200px" width="6" height="4" viewBox="0 0 6 4"><path d="M0.800 0.700L2.800 2.800L4.800 0.700" fill="none" stroke="#a8a8a8" stroke-width="0.800"/></svg>
<div class="t" style="left:500px;top:64.600px;color:#d8d8d8"><span style="transform:scaleX(0.900)">Opacity:</span></div>

<!-- lock row -->
<div class="t" style="left:411px;top:83.300px;color:#d8d8d8"><span style="transform:scaleX(0.845)">Lock:</span></div>
<svg class="a" style="left:433.200px;top:84.300px" width="8" height="8" viewBox="0 0 9 9"><rect x="0.500" y="0.500" width="8" height="8" fill="none" stroke="#dcdcdc" stroke-width="0.800" stroke-dasharray="1.300 0.900"/><rect x="2.200" y="2.200" width="2.300" height="2.300" fill="#dcdcdc"/><rect x="4.500" y="4.500" width="2.300" height="2.300" fill="#dcdcdc"/></svg>
<svg class="a" style="left:448px;top:83.800px" width="8" height="9" viewBox="0 0 9 10"><path d="M8.200 0.600L3.600 6.200" stroke="#dcdcdc" stroke-width="1.200"/><path d="M3.800 5.800C2.600 6 2.400 7.600 0.800 9.200C2.600 9.200 4.200 8.400 4.400 6.600Z" fill="#dcdcdc"/></svg>
<svg class="a" style="left:461.300px;top:83.800px" width="9" height="9" viewBox="0 0 10 10"><path d="M5 0.300L6.600 2.200H5.500V4.500H7.800V3.400L9.700 5L7.800 6.600V5.500H5.500V7.800H6.600L5 9.700L3.400 7.800H4.500V5.500H2.200V6.600L0.300 5L2.200 3.400V4.500H4.500V2.200H3.400Z" fill="#dcdcdc"/></svg>
<svg class="a" style="left:475.500px;top:83.800px" width="8.800" height="8.800" viewBox="0 0 10 10"><path d="M2.200 0.500V7.500H9.500" fill="none" stroke="#dcdcdc" stroke-width="1.100"/><path d="M0.500 2.200H5.800L7.600 4V9.500" fill="none" stroke="#dcdcdc" stroke-width="1.100"/></svg>
<svg class="a" style="left:491.800px;top:83.600px" width="7.200" height="9" viewBox="0 0 8 10"><path d="M2.200 4.500V2.800A1.800 1.800 0 0 1 5.800 2.800V4.500" fill="none" stroke="#e6e6e6" stroke-width="1.100"/><rect x="0.500" y="4.200" width="7" height="5.300" rx="0.500" fill="#e6e6e6"/></svg>
<div class="t" style="left:514.500px;top:83.300px;color:#d8d8d8"><span style="transform:scaleX(0.845)">Fill:</span></div>

<!-- layer rows -->
<div class="a" style="left:406.500px;top:96.800px;width:116.500px;height:1px;background:#484848"></div>
<div class="a" style="left:427px;top:97.500px;width:96px;height:60px;background:#626262"></div>
<div class="a" style="left:406.500px;top:157.500px;width:116.500px;height:173px;background:#535353"></div>
<div class="a" style="left:406.500px;top:157px;width:116.500px;height:1px;background:#464646"></div>
<div class="a" style="left:406.500px;top:213.500px;width:116.500px;height:1px;background:#464646"></div>
<div class="a" style="left:406.500px;top:271.500px;width:116.500px;height:1px;background:#464646"></div>
<div class="a" style="left:406.500px;top:330px;width:116.500px;height:1px;background:#464646"></div>
<div class="a" style="left:426.500px;top:97.500px;width:1px;height:233px;background:#4b4b4b"></div>
<div class="a" style="left:406.500px;top:331px;width:116.500px;height:54.500px;background:#4b4b4b"></div>
<div class="a" style="left:406.500px;top:385.500px;width:116.500px;height:19.500px;background:#535353"></div>
<div class="a" style="left:406.500px;top:403.500px;width:116.500px;height:1.500px;background:#3c3c3c"></div>

<!-- row 1 thumb -->
<div class="a" style="left:428.500px;top:102px;width:55px;height:51px;background:#6b6b6b;border:1px solid #7a7a7a;box-sizing:border-box"></div>
<svg class="a" style="left:428px;top:101.500px" width="56" height="52" viewBox="0 0 56 52"><path d="M0.500 12V0.500H18M38 0.500H55.500V12M55.500 40V51.500H38M18 51.500H0.500V40" fill="none" stroke="#e8e8e8" stroke-width="1"/></svg>
<div class="a" id="th1" style="left:439.800px;top:112.500px;width:33px;height:30.700px;background:#e8e8e8;overflow:hidden">
<svg width="33" height="30.700" viewBox="104 58 354.800 330" style="position:absolute;left:0;top:0"><use href="#pt"/><path d="M407 308L435 320L452 333L458 350V390H97V380H407Z" fill="#ae2b2d"/></svg>
</div>
<svg class="a" style="left:474px;top:144.300px" width="8" height="8" viewBox="0 0 8 8"><rect x="0" y="0" width="8" height="8" fill="#6b6b6b"/><rect x="1.500" y="1.500" width="5" height="5" fill="none" stroke="#e8e8e8" stroke-width="1"/><rect x="0.300" y="0.300" width="2" height="2" fill="#e8e8e8"/><rect x="5.700" y="0.300" width="2" height="2" fill="#e8e8e8"/><rect x="0.300" y="5.700" width="2" height="2" fill="#e8e8e8"/><rect x="5.700" y="5.700" width="2" height="2" fill="#e8e8e8"/></svg>
<div class="t" style="left:488.800px;top:123.300px"><span style="transform:scaleX(0.845)">Solid Color</span></div>

<!-- row 2 threshold -->
<svg class="a" style="left:450.300px;top:180.700px" width="11.800" height="9.600" viewBox="0 0 11.800 9.600"><rect x="0" y="0" width="11.800" height="9.600" fill="#ececec"/><path d="M1.400 5.800L3.600 4L5.200 4.300L9.600 1.800L9.800 3L6 5.200L4.400 5L1.800 6.800Z" fill="#2e2e2e"/><path d="M5 8L7 7.200L9.800 7.300L10 8.400L6 8.700Z" fill="#5a5a5a"/></svg>
<div class="t" style="left:490px;top:180.500px"><span style="transform:scaleX(0.845)">Threshold</span></div>

<!-- row 3 -->
<div class="a" style="left:429.500px;top:219.500px;width:53.500px;height:47px;background:#555;border:1px solid #474747;box-sizing:border-box"></div>
<div class="a" id="th3" style="left:440px;top:228px;width:32.500px;height:30.500px;background:#ececec;overflow:hidden">
<svg width="32.500" height="30.500" viewBox="0 0 65 61" style="position:absolute;left:0;top:0"><path d="M1 61C2 52 8 48 18 45L28 40.500H41L50 45C58 48 63 52 64 61Z" fill="#131313"/><path d="M25 22C27 14 42 14 44 22L44 31L40.500 39L41.500 44C38 48.500 31 48.500 28 44L29 39L25 31Z" fill="#cfa48c"/><path d="M20.500 27C17 14 22 2 34 2C46 1 51 12 47.500 27L45 30C45 21 42 17.500 36 18.500C30 16.500 26 19 25 30Z" fill="#3d2a1e"/></svg>
</div>
<div class="t" style="left:490px;top:238px"><span style="transform:scaleX(0.845)">Background copy</span></div>

<!-- row 4 -->
<div class="a" style="left:429.500px;top:277.500px;width:53.500px;height:50px;background:#555;border:1px solid #474747;box-sizing:border-box"></div>
<div class="a" id="th4" style="left:440px;top:287px;width:32.500px;height:30.500px;background:#bd8a62;overflow:hidden">
<svg width="32.500" height="30.500" viewBox="0 0 65 61" style="position:absolute;left:0;top:0"><path d="M1 61C2 52 8 48 18 45L28 40.500H41L50 45C58 48 63 52 64 61Z" fill="#131313"/><path d="M25 22C27 14 42 14 44 22L44 31L40.500 39L41.500 44C38 48.500 31 48.500 28 44L29 39L25 31Z" fill="#d6a988"/><path d="M20.500 27C17 14 22 2 34 2C46 1 51 12 47.500 27L45 30C45 21 42 17.500 36 18.500C30 16.500 26 19 25 30Z" fill="#3d2a1e"/></svg>
</div>
<div class="t" style="left:490px;top:297px;font-style:italic"><span style="transform:scaleX(0.845)">Background</span></div>
<div class="a" style="left:412px;top:294px;width:9.500px;height:1px;background:#5e5e5e"></div>
<div class="a" style="left:416.500px;top:288px;width:1px;height:8px;background:#5c5c5c"></div>

<!-- eyes -->
<svg class="a eye" style="left:412px;top:124.500px" width="10" height="7" viewBox="0 0 10 7"><path d="M0.300 3.500C2 0.600 8 0.600 9.700 3.500C8 6.400 2 6.400 0.300 3.500Z" fill="#ececec"/><circle cx="5" cy="3.400" r="1.500" fill="#555"/></svg>
<svg class="a eye" style="left:412px;top:182px" width="10" height="7" viewBox="0 0 10 7"><path d="M0.300 3.500C2 0.600 8 0.600 9.700 3.500C8 6.400 2 6.400 0.300 3.500Z" fill="#ececec"/><circle cx="5" cy="3.400" r="1.500" fill="#555"/></svg>
<svg class="a eye" style="left:412px;top:239.500px" width="10" height="7" viewBox="0 0 10 7"><path d="M0.300 3.500C2 0.600 8 0.600 9.700 3.500C8 6.400 2 6.400 0.300 3.500Z" fill="#ececec"/><circle cx="5" cy="3.400" r="1.500" fill="#555"/></svg>

<!-- footer icons -->
<svg class="a" style="left:462px;top:392.500px" width="10" height="6" viewBox="0 0 10 6"><rect x="0.500" y="1" width="4.500" height="3.600" rx="1.800" fill="none" stroke="#7d7d7d" stroke-width="0.900"/><rect x="5" y="1" width="4.500" height="3.600" rx="1.800" fill="none" stroke="#7d7d7d" stroke-width="0.900"/><path d="M3.500 2.800H6.500" stroke="#7d7d7d" stroke-width="0.900"/></svg>
<div class="t" style="left:481px;top:389.500px;font-style:italic;font-size:9.500px;color:#e4e4e4;font-family:'Liberation Serif',serif"><span>fx</span></div>
<div class="a" style="left:489.500px;top:399px;width:2px;height:1.200px;background:#ddd"></div>
<svg class="a" style="left:498.500px;top:391.500px" width="9" height="7" viewBox="0 0 9 7"><rect x="0" y="0" width="9" height="7" rx="0.600" fill="#e4e4e4"/><circle cx="4.500" cy="3.500" r="1.900" fill="#535353"/></svg>
<svg class="a" style="left:516.500px;top:391.500px" width="8" height="8" viewBox="0 0 8 8"><circle cx="4" cy="4" r="3.300" fill="none" stroke="#e2e2e2" stroke-width="1"/><path d="M1.600 6.400A3.300 3.300 0 0 0 6.400 1.600Z" fill="#e2e2e2"/></svg>

</div>
<div id="menu">
<div class="mi" style="top:3.0px"><span>Quick Export as PNG</span></div>
<div class="hl" style="top:14.2px"></div>
<div class="mi hi" style="top:13.4px"><span>Export As...</span></div>
<div class="sep" style="top:29.1px"></div>
<div class="mi" style="top:32.3px"><span>Artboard from Layers...</span></div>
<div class="mi dis" style="top:43.5px"><span>Frame from Layers...</span></div>
<div class="mi" style="top:54.6px"><span>Convert to Frame</span></div>
<div class="sep" style="top:70.4px"></div>
<div class="mi" style="top:73.3px"><span>Convert to Smart Object</span></div>
<div class="sep" style="top:89.0px"></div>
<div class="mi" style="top:92.3px"><span>Rasterize Layer</span></div>
<div class="mi dis" style="top:103.6px"><span>Rasterize Layer Style</span></div>
<div class="sep" style="top:118.5px"></div>
<div class="mi dis" style="top:122.2px"><span>Enable Layer Mask</span></div>
<div class="mi dis" style="top:133.0px"><span>Disable Vector Mask</span></div>
<div class="mi" style="top:144.0px"><span>Create Clipping Mask</span></div>
<div class="sep" style="top:159.3px"></div>
<div class="mi dis" style="top:162.7px"><span>Link Layers</span></div>
<div class="mi dis" style="top:174.0px"><span>Select Linked Layers</span></div>
<div class="sep" style="top:188.9px"></div>
<div class="mi dis" style="top:193.1px"><span>Copy Layer Style</span></div>
<div class="mi dis" style="top:204.0px"><span>Paste Layer Style</span></div>
<div class="mi dis" style="top:215.0px"><span>Clear Layer Style</span></div>
<div class="sep" style="top:230.2px"></div>
<div class="mi" style="top:234.4px"><span>Copy Shape Attributes</span></div>
<div class="mi dis" style="top:245.0px"><span>Paste Shape Attributes</span></div>
<div class="sep" style="top:259.5px"></div>
<div class="mi dis" style="top:263.6px"><span>Release from Isolation</span></div>
<div class="sep" style="top:278.8px"></div>
<div class="mi dis" style="top:282.3px"><span>Merge Layers</span></div>
<div class="mi" style="top:293.2px"><span>Merge Visible</span></div>
<div class="mi" style="top:304.7px"><span>Flatten Image</span></div>
<div class="sep" style="top:319.9px"></div>
<div class="mi" style="top:323.3px"><span>No Color</span></div>
<div class="mi" style="top:334.3px"><span>Red</span></div>
<div class="mi" style="top:345.6px"><span>Orange</span></div>
<div class="mi" style="top:356.8px"><span>Yellow</span></div>
<div class="mi" style="top:367.5px"><span>Green</span></div>
<div class="mi" style="top:379.0px"><span>Blue</span></div>
<div class="mi" style="top:390.3px"><span>Violet</span></div>
<div class="mi" style="top:400.6px"><span>Gray</span></div>
<svg id="cursor" style="filter:drop-shadow(0.800px 1.200px 0.800px rgba(0,0,0,0.4));position:absolute;left:111.300px;top:21px" width="24" height="26" viewBox="0 0 24 26"><path d="M8 3.600C8 2.300 8.900 1.700 10 1.700C11.100 1.700 12 2.300 12 3.600V9.600C12.600 8.500 14.600 8.500 15.100 9.800C15.900 9 17.600 9.300 17.900 10.600C18.900 10.200 20.300 10.800 20.400 12.200V17C20.400 19.500 19.200 21.500 17.600 23.200H10C8 21.500 6 19.300 4.500 17.200C3.200 15.500 1.300 14.300 1.900 13.100C2.700 11.800 5.500 13 8 15.200Z" fill="#fff" stroke="#111" stroke-width="1.500" stroke-linejoin="round"/><path d="M12 9.600V13.500M15 10V13.500M17.900 10.800V13.800" stroke="#111" stroke-width="1.100" fill="none"/></svg>
</div>
</div>
</body></html>
